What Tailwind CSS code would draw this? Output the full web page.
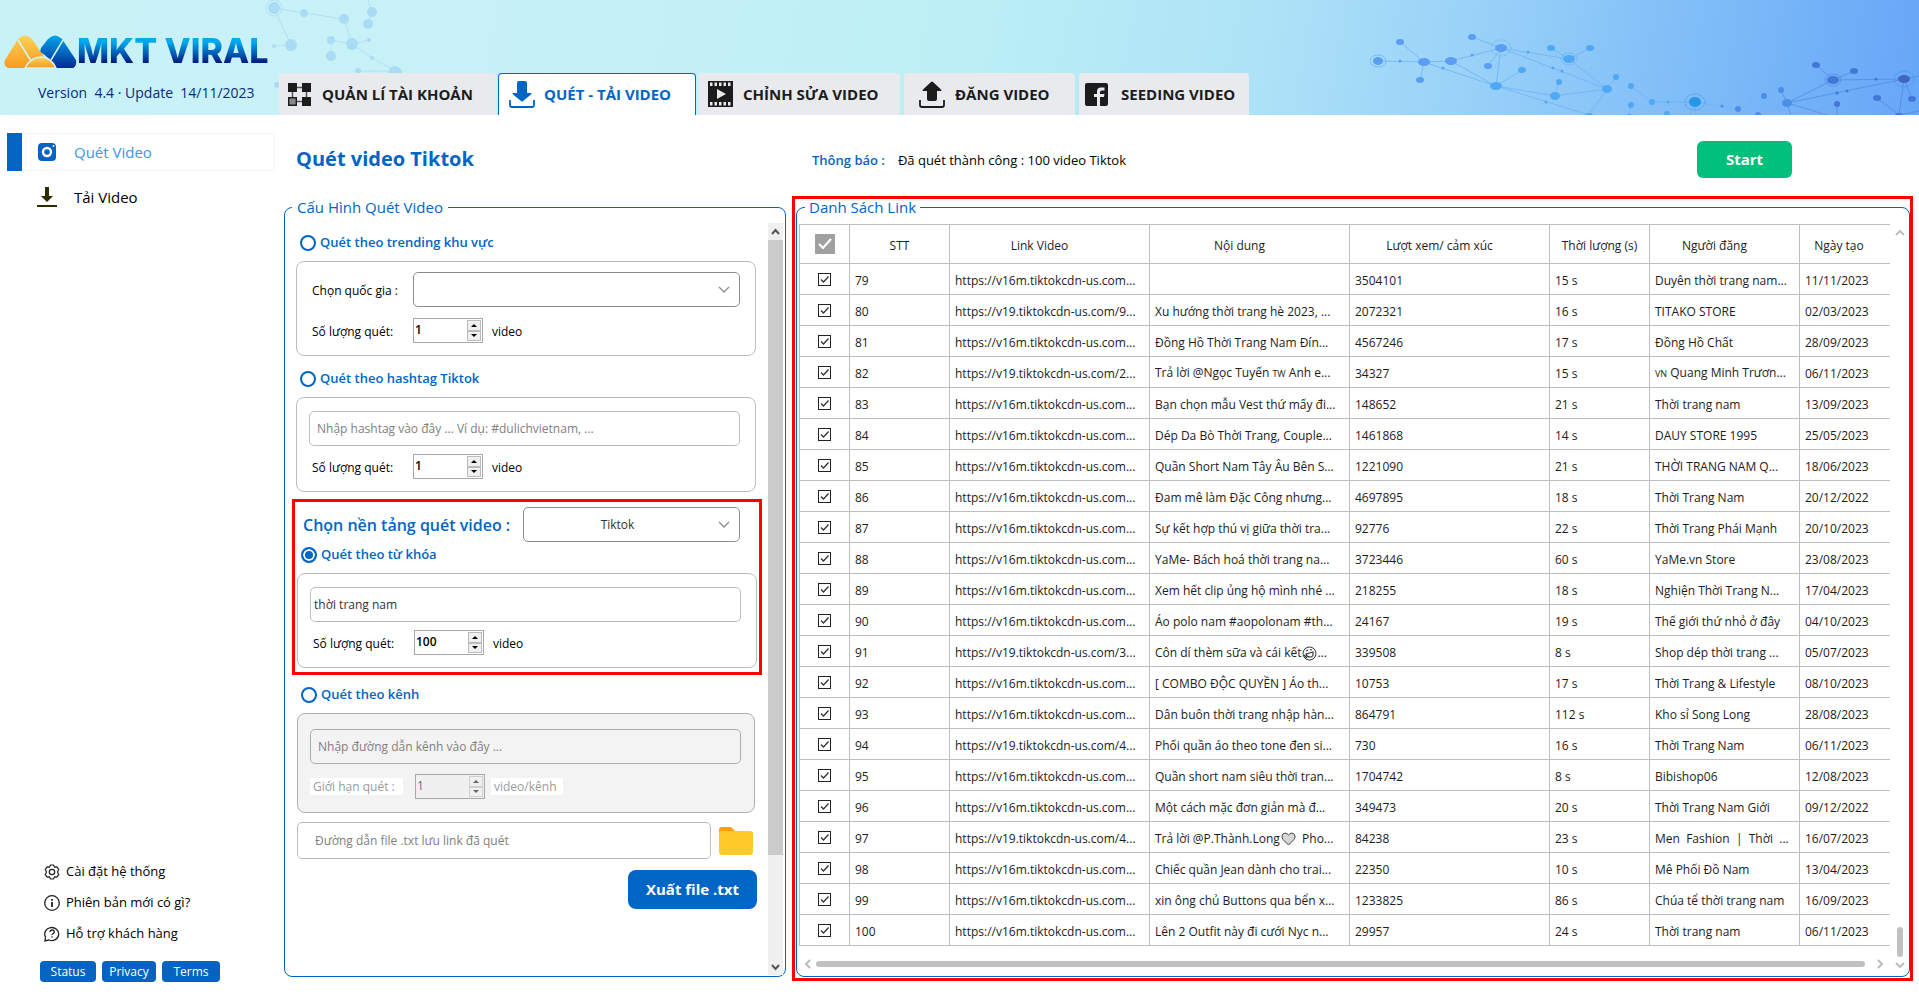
<!DOCTYPE html>
<html lang="vi">
<head>
<meta charset="utf-8">
<title>MKT Viral</title>
<script src="https://cdn.jsdelivr.net/npm/@tailwindcss/browser@4"></script>
</head>
<body class="flex min-h-screen flex-col bg-white font-['Open_Sans','Noto_Sans',sans-serif] text-[13px] text-black">

<header class="relative flex h-[115px] shrink-0 overflow-hidden bg-[linear-gradient(100deg,#c9f2f7_0%,#c6f1f7_30%,#bceff5_50%,#aee3f7_65%,#9ad2f8_76%,#83c0f8_86%,#66a6f7_100%)]">
  <!-- network pattern, left -->
  <svg class="absolute top-0 left-[260px]" width="150" height="115" fill="#a9dbf5" stroke="none" aria-hidden="true">
    <path d="M18 0 14 8 44 13 84 19 92 44 112 58 136 71M14 8 31 45 14 46M71 40l20 4 18-4M71 40v15M108 0l4 12-4 12M97 71h34" fill="none" stroke="#b3e0f4"/>
    <circle cx="14" cy="8" r="8" fill="none" stroke="#b3e0f4"/>
    <circle cx="14" cy="8" r="6"/><circle cx="44" cy="13" r="4"/><circle cx="84" cy="19" r="5"/><circle cx="112" cy="12" r="5"/><circle cx="108" cy="24" r="5"/><circle cx="31" cy="45" r="6"/><circle cx="14" cy="46" r="2"/><circle cx="71" cy="40" r="4"/><circle cx="71" cy="56" r="5"/><circle cx="92" cy="44" r="6"/><circle cx="109" cy="40" r="2"/><circle cx="112" cy="58" r="2"/><circle cx="98" cy="71" r="3"/><circle cx="135" cy="73" r="7"/><circle cx="17" cy="85" r="3"/>
  </svg>
  <!-- network pattern, right -->
  <svg class="absolute top-0 right-0" width="549" height="115" aria-hidden="true">
    <g fill="none" stroke="#6fb2f5" opacity=".8">
      <path d="M8 61 54 62 30 42M50 80l4-18 72 24L81 61M54 62l27-1 50-13-29-11M118 66l13-18-5 38 26-16M131 48l68 11-18-11M131 48l106 41-38-30 21-11M246 77l-9 12-52 7 4-14M185 96l-59-10 93 29 18-26M261 86l21 16h43l43 7 26-13M261 105l-2 10M325 102l-5 13M325 102l1 13"/>
      <ellipse cx="8" cy="61" rx="8" ry="6"/><ellipse cx="131" cy="48" rx="10" ry="8" stroke-dasharray="2 1"/><ellipse cx="199" cy="59" rx="8" ry="6"/><ellipse cx="325" cy="102" rx="10" ry="8" stroke="#3a97ea" stroke-dasharray="2 1"/>
    </g>
    <g fill="none" stroke="#4a80dd" opacity=".6">
      <path d="M446 65l17 15 21-9M463 80l71-1-117 24-6-13M463 80l-46 23 40 12M417 103l4 12M467 104v11M534 79l-5 36-22-17M534 79l8 20M534 79l15-3M529 115l20-4"/>
      <ellipse cx="463" cy="80" rx="8" ry="6"/><ellipse cx="534" cy="79" rx="10" ry="8" stroke-dasharray="2 1"/>
    </g>
    <g fill="#5a9df2"><ellipse cx="8" cy="61" rx="5" ry="4"/><ellipse cx="30" cy="42" rx="4" ry="3"/><ellipse cx="50" cy="80" rx="4" ry="3"/><circle cx="30" cy="61" r="1.500"/><ellipse cx="54" cy="62" rx="6" ry="4"/><ellipse cx="81" cy="61" rx="6" ry="4"/><circle cx="73" cy="68" r="1.500"/><circle cx="102" cy="55" r="1.500"/><ellipse cx="102" cy="37" rx="4" ry="3"/><ellipse cx="131" cy="48" rx="6" ry="4"/><ellipse cx="118" cy="66" rx="4" ry="3"/></g>
    <g fill="#4fa8f4"><ellipse cx="126" cy="86" rx="6" ry="4"/><ellipse cx="152" cy="70" rx="4" ry="3"/><circle cx="158" cy="52" r="1.500"/><circle cx="183" cy="68" r="1.500"/><circle cx="192" cy="71" r="1.500"/><circle cx="176" cy="102" r="1.500"/><ellipse cx="181" cy="48" rx="4" ry="3"/><ellipse cx="220" cy="48" rx="4" ry="3"/><ellipse cx="199" cy="59" rx="6" ry="4"/><circle cx="189" cy="82" r="3"/><ellipse cx="185" cy="96" rx="5" ry="4"/><circle cx="246" cy="77" r="3"/><ellipse cx="237" cy="89" rx="5" ry="4"/><circle cx="261" cy="86" r="3"/><circle cx="282" cy="102" r="3"/><circle cx="298" cy="102" r="1.500"/><circle cx="261" cy="105" r="3"/><circle cx="297" cy="114" r="3"/><ellipse cx="219" cy="115" rx="4" ry="2"/><ellipse cx="259" cy="115" rx="3" ry="1"/></g>
    <ellipse cx="325" cy="102" rx="6" ry="5" fill="#2896ea"/>
    <g fill="#4a8ee8"><circle cx="352" cy="106" r="1.500"/><circle cx="368" cy="109" r="3"/><circle cx="394" cy="96" r="3"/><circle cx="411" cy="90" r="3"/><ellipse cx="417" cy="103" rx="5" ry="4"/><circle cx="388" cy="115" r="3"/></g>
    <g fill="#4277d8"><ellipse cx="446" cy="65" rx="4" ry="3"/><ellipse cx="484" cy="71" rx="4" ry="3"/><ellipse cx="463" cy="80" rx="6" ry="4"/><circle cx="467" cy="93" r="1.500"/><circle cx="477" cy="91" r="1.500"/><circle cx="506" cy="79" r="1.500"/><circle cx="467" cy="104" r="3"/><ellipse cx="507" cy="98" rx="4" ry="3"/><ellipse cx="534" cy="79" rx="6" ry="4" fill="#3f66c6"/><ellipse cx="542" cy="99" rx="4" ry="3"/><ellipse cx="529" cy="115" rx="4" ry="2"/></g>
  </svg>

  <div class="z-10 flex w-[279px] shrink-0 flex-col pt-[35px] pl-1">
    <div class="flex h-[34px] items-end">
      <svg class="shrink-0" width="73" height="34" viewBox="0 0 73 34" aria-hidden="true">
        <defs>
          <linearGradient id="gold" x1="0" y1="0" x2="0" y2="1"><stop offset="0" stop-color="#fbd25a"/><stop offset="1" stop-color="#fa9a1c"/></linearGradient>
          <linearGradient id="sea" x1="0" y1="0" x2="0" y2="1"><stop offset="0" stop-color="#02a5ec"/><stop offset="1" stop-color="#022a94"/></linearGradient>
        </defs>
        <path d="M37 13 44 4q7-7 14 0L72 25q1 6-3 8H50Q46 22 36 17z" fill="url(#sea)"/>
        <path d="M1 25 14 4q7-7 14 0l13 19-5 10H4q-5-3-3-8z" fill="url(#gold)"/>
        <path d="M14 5 27 26M59 5 47 25" stroke="#d5f4f8" stroke-width="1.5" fill="none"/>
        <path d="M21 33Q27 22 37 22T52 33z" fill="url(#gold)" stroke="#d5f4f8" stroke-width="1.5"/>
        <path d="M18 33.500h36v.5H18z" fill="#d5f4f8"/>
      </svg>
      <span class="bg-linear-to-b from-[#02a9ee] from-25% to-[#021f88] to-80% bg-clip-text font-['Inter'] text-[34px] leading-[36px] font-extrabold whitespace-nowrap text-transparent">MKT VIRAL</span>
    </div>
    <p class="mt-3 pl-[34px] text-[14px] leading-6 font-medium whitespace-pre text-[#0b2a7a]">Version  4.4 · Update  14/11/2023</p>
  </div>

  <nav class="z-10 flex items-end text-[15px] font-bold text-[#1c1c1c]">
    <button class="flex h-[42px] w-[217px] items-center gap-[11px] rounded-t bg-[#e9eaee] pl-[9px] whitespace-nowrap">
      <svg width="23" height="23" viewBox="0 0 23 23" aria-hidden="true"><path d="M9 4.500h5M4.500 9v5M18.500 9v5M9 18.500h5" stroke="#555" stroke-width="1.500"/><path d="M0 0h9v9H0zM14 0h9v9h-9zM14 14h9v9h-9z" fill="#1c1c1c"/><path d="M.7.7h7.600v7.600H.7z" transform="translate(0 14)" fill="#888" stroke="#1c1c1c" stroke-width="1.400"/></svg>
      QUẢN LÍ TÀI KHOẢN</button>
    <button class="ml-[2px] flex h-[42px] w-[198px] items-center gap-[9px] rounded-t border border-b-0 border-[#0066c5] bg-white pl-[10px] whitespace-nowrap text-[#0066c5]">
      <svg width="26" height="27" viewBox="0 0 26 27" fill="#0066c5" aria-hidden="true"><path d="M8 2q0-2 2-2h6q2 0 2 2v10h4q1 0 0 1.500L14 20q-1 1-2 0L4 13.500Q3 12 4 12h4z"/><path d="M1 19v5q0 2 2 2h20q2 0 2-2v-5" fill="none" stroke="#0066c5" stroke-width="1.800"/></svg>
      QUÉT - TẢI VIDEO</button>
    <button class="ml-[3px] flex h-[42px] w-[201px] items-center gap-[10px] rounded-t bg-[#e9eaee] pl-[9px] whitespace-nowrap">
      <svg width="25" height="26" viewBox="0 0 25 26" aria-hidden="true"><path d="M0 0h25v26H0z" fill="#1c1c1c"/><path d="M2 1.500h2.500V5H2zM6.500 1.500H9V5H6.500zM11 1.500h2.500V5H11zM15.500 1.500H18V5h-2.500zM20 1.500h2.500V5H20zM2 21h2.500v3.500H2zM6.500 21H9v3.500H6.500zM11 21h2.500v3.500H11zM15.500 21H18v3.500h-2.500zM20 21h2.500v3.500H20zM9 8l9 5-9 5z" fill="#e9eaee"/></svg>
      CHỈNH SỬA VIDEO</button>
    <button class="ml-[4px] flex h-[42px] w-[171px] items-center gap-[10px] rounded-t bg-[#e9eaee] pl-[15px] whitespace-nowrap">
      <svg width="26" height="27" viewBox="0 0 26 27" fill="#1c1c1c" aria-hidden="true"><path d="M8 18q0 2 2 2h6q2 0 2-2v-8h4q1 0 0-1.500L14 1q-1-1-2 0L4 8.500Q3 10 4 10h4z"/><path d="M1 19v5q0 2 2 2h20q2 0 2-2v-5" fill="none" stroke="#1c1c1c" stroke-width="1.800"/></svg>
      ĐĂNG VIDEO</button>
    <button class="ml-[4px] flex h-[42px] w-[170px] items-center gap-[13px] rounded-t bg-[#e9eaee] pl-[6px] whitespace-nowrap">
      <svg width="23" height="23" viewBox="0 0 23 23" aria-hidden="true"><rect width="23" height="23" rx="2" fill="#1c1c1c"/><path d="M12 23v-9H9v-3h3V8.500Q12 4.500 16 4.500h3.500v3H17q-2 0-2 1.500v2h4.500l-.5 3h-4v9z" fill="#e9eaee"/></svg>
      SEEDING VIDEO</button>
  </nav>
</header>

<div class="flex flex-1">
  <aside class="flex w-[284px] shrink-0 flex-col pt-[18px] pb-[12px] pl-[7px]">
    <a href="#" class="flex h-[38px] items-stretch gap-[3px] text-[#4095e5]">
      <span class="w-[15px] bg-[#0563c1]"></span>
      <span class="flex w-[250px] items-center gap-[18px] border border-[#eef8fd] pl-3 text-[15px]">
        <svg width="18" height="18" viewBox="0 0 18 18" aria-hidden="true"><rect width="18" height="18" rx="4" fill="#0563c1"/><circle cx="9" cy="9" r="4" fill="none" stroke="#fff" stroke-width="2.400"/><circle cx="15.500" cy="3" r="1" fill="#fff"/></svg>
        Quét Video</span>
    </a>
    <a href="#" class="mt-2 flex h-[36px] items-center gap-[17px] pl-[30px] text-[15px]">
      <svg width="20" height="20" viewBox="0 0 20 20" fill="#2c2c00" aria-hidden="true"><path d="M8 0h4v9h4l-6 6-6-6h4zM0 18h20v2H0z"/></svg>
      Tải Video</a>
    <div class="mt-auto flex flex-col text-[13px]">
      <a href="#" class="flex h-[31px] items-center gap-[6px] pl-[37px]">
        <svg width="16" height="16" viewBox="0 0 16 16" fill="none" stroke="#222" stroke-width="1.200" aria-hidden="true"><path d="M6.500 1h3l1 2 2.300-.2L14.700 5.400 13.500 8l1.200 2.600-1.900 2.600-2.300-.2-1 2h-3l-1-2-2.300.2-1.900-2.600L2.500 8 1.300 5.400l1.900-2.600 2.300.2z"/><circle cx="8" cy="8" r="2.700"/></svg>
        Cài đặt hệ thống</a>
      <a href="#" class="flex h-[31px] items-center gap-[6px] pl-[37px]">
        <svg width="16" height="16" viewBox="0 0 16 16" fill="none" stroke="#222" stroke-width="1.300" aria-hidden="true"><circle cx="8" cy="8" r="7.300"/><path d="M8 7v5M8 4v1.800" stroke-width="1.800"/></svg>
        Phiên bản mới có gì?</a>
      <a href="#" class="flex h-[31px] items-center gap-[6px] pl-[37px]">
        <svg width="16" height="16" viewBox="0 0 16 16" fill="none" stroke="#222" stroke-width="1.300" aria-hidden="true"><path d="M1.500 11A7 6.500 0 1 1 5 14L1 15z"/><path d="M6 6q.2-2 2.200-2T10.300 6q0 1-1.200 1.600T8.100 9M8.100 10.200v1.300"/></svg>
        Hỗ trợ khách hàng</a>
    </div>
    <div class="mt-3 flex gap-[6px] pl-[33px] text-[12px] leading-[21px] text-white">
      <button class="w-[56px] rounded bg-[#0563c1]">Status</button>
      <button class="w-[54px] rounded bg-[#0563c1]">Privacy</button>
      <button class="w-[58px] rounded bg-[#0563c1]">Terms</button>
    </div>
  </aside>

  <main class="flex min-w-0 flex-1 flex-col">
    <div class="flex h-[81px] items-center pt-[7px] pr-[127px]">
      <h1 class="w-[528px] pl-3 text-[20px] leading-7 font-bold text-[#0066c5]">Quét video Tiktok</h1>
      <p class="flex gap-[13px] pt-1 text-[13px]"><span class="font-semibold text-[#0066c5]">Thông báo :</span><span>Đã quét thành công : 100 video Tiktok</span></p>
      <button class="ml-auto h-[37px] w-[95px] rounded-md bg-[#00c07c] text-[15px] font-bold text-white">Start</button>
    </div>

    <div class="flex flex-1 gap-[6px] pr-[6px] pb-[13px]">
      <fieldset class="mt-px mb-1 flex w-[502px] shrink-0 rounded-lg border border-[#0066c5]">
        <legend class="ml-[7px] px-[5px] text-[15px] leading-5 text-[#0066c5]">Cấu Hình Quét Video</legend>
        <form class="flex flex-1 flex-col pt-[15px] pl-[11px]" onsubmit="return false">
          <label class="flex h-[21px] items-center gap-1 pl-1 text-[13px] font-semibold text-[#0066c5]"><input type="radio" name="mode" class="size-4 appearance-none rounded-full border-2 border-[#0066c5] bg-white checked:bg-[#0066c5] checked:shadow-[inset_0_0_0_2px_white]">Quét theo trending khu vực</label>
          <section class="mt-2 w-[460px] rounded-lg border border-[#bdbdbd] px-[15px] pt-[10px] pb-3 text-[12px]">
            <div class="flex items-center"><label for="country" class="w-[101px] pt-[3px]">Chọn quốc gia :</label>
              <span class="grid h-[35px] w-[327px]"><select id="country" class="[grid-area:1/1] appearance-none rounded-[5px] border border-[#8c8c8c] bg-white"><option></option></select><svg class="pointer-events-none mr-[10px] self-center justify-self-end [grid-area:1/1]" width="12" height="8" fill="none" stroke="#8c8c8c" stroke-width="1.300" aria-hidden="true"><path d="M1 1l5 5 5-5"/></svg></span></div>
            <div class="mt-[11px] flex items-center"><label for="n1" class="w-[101px] pt-[3px]">Số lượng quét:</label>
              <span class="flex h-[25px] w-[70px] border border-[#a7a7ad] bg-white p-px"><input id="n1" type="text" inputmode="numeric" value="1" class="h-[19px] w-0 flex-1 font-semibold outline-none"><span class="flex w-[14px] flex-col"><button aria-label="Tăng" class="flex flex-1 items-center justify-center border border-[#bbb] bg-[#f0f0f0]"><svg width="6" height="3"><path d="M0 3h6L3 0z"/></svg></button><button aria-label="Giảm" class="flex flex-1 items-center justify-center border border-[#bbb] bg-[#f0f0f0]"><svg width="6" height="3"><path d="M0 0h6L3 3z"/></svg></button></span></span>
              <span class="ml-[9px] pt-[3px]">video</span></div>
          </section>

          <label class="mt-3 flex h-[21px] items-center gap-1 pl-1 text-[13px] font-semibold text-[#0066c5]"><input type="radio" name="mode" class="size-4 appearance-none rounded-full border-2 border-[#0066c5] bg-white checked:bg-[#0066c5] checked:shadow-[inset_0_0_0_2px_white]">Quét theo hashtag Tiktok</label>
          <section class="mt-2 w-[460px] rounded-lg border border-[#bdbdbd] px-[15px] pt-[13px] pb-3 text-[12px]">
            <input type="text" aria-label="Hashtag" placeholder="Nhập hashtag vào đây ... Ví dụ: #dulichvietnam, ..." class="-ml-[3px] block h-[35px] w-[431px] rounded-[5px] border border-[#bdbdbd] px-[7px] placeholder:text-[#808080]">
            <div class="mt-2 flex items-center"><label for="n2" class="w-[101px] pt-[3px]">Số lượng quét:</label>
              <span class="flex h-[25px] w-[70px] border border-[#a7a7ad] bg-white p-px"><input id="n2" type="text" inputmode="numeric" value="1" class="h-[19px] w-0 flex-1 font-semibold outline-none"><span class="flex w-[14px] flex-col"><button aria-label="Tăng" class="flex flex-1 items-center justify-center border border-[#bbb] bg-[#f0f0f0]"><svg width="6" height="3"><path d="M0 3h6L3 0z"/></svg></button><button aria-label="Giảm" class="flex flex-1 items-center justify-center border border-[#bbb] bg-[#f0f0f0]"><svg width="6" height="3"><path d="M0 0h6L3 3z"/></svg></button></span></span>
              <span class="ml-[9px] pt-[3px]">video</span></div>
          </section>

          <div class="mt-[7px] -ml-1 w-[470px] border-3 border-[#ff0000] pt-[5px] pb-1 pl-[2px]">
            <div class="flex items-center pl-[6px]"><label for="platform" class="w-[220px] text-[16px] leading-5 font-semibold whitespace-nowrap text-[#0066c5]">Chọn nền tảng quét video :</label>
              <span class="grid h-[35px] w-[217px]"><select id="platform" class="appearance-none rounded-[5px] border border-[#8c8c8c] bg-white pr-[28px] text-center text-[12px] text-[#333] [grid-area:1/1]"><option>Tiktok</option></select><svg class="pointer-events-none mr-[10px] self-center justify-self-end [grid-area:1/1]" width="12" height="8" fill="none" stroke="#8c8c8c" stroke-width="1.300" aria-hidden="true"><path d="M1 1l5 5 5-5"/></svg></span></div>
            <label class="mt-[2px] flex h-[21px] items-center gap-1 pl-1 text-[13px] font-semibold text-[#0066c5]"><input type="radio" name="mode" checked class="size-4 appearance-none rounded-full border-2 border-[#0066c5] bg-white checked:bg-[#0066c5] checked:shadow-[inset_0_0_0_2px_white]">Quét theo từ khóa</label>
            <section class="mt-2 w-[460px] rounded-lg border border-[#bdbdbd] px-[15px] pt-[13px] pb-3 text-[12px]">
              <input type="text" aria-label="Từ khóa" value="thời trang nam" class="-ml-[3px] block h-[35px] w-[431px] rounded-[5px] border border-[#bdbdbd] px-[3px] text-[#333]">
              <div class="mt-2 flex items-center"><label for="n3" class="w-[101px] pt-[3px]">Số lượng quét:</label>
                <span class="flex h-[25px] w-[70px] border border-[#a7a7ad] bg-white p-px"><input id="n3" type="text" inputmode="numeric" value="100" class="h-[19px] w-0 flex-1 font-semibold outline-none"><span class="flex w-[14px] flex-col"><button aria-label="Tăng" class="flex flex-1 items-center justify-center border border-[#bbb] bg-[#f0f0f0]"><svg width="6" height="3"><path d="M0 3h6L3 0z"/></svg></button><button aria-label="Giảm" class="flex flex-1 items-center justify-center border border-[#bbb] bg-[#f0f0f0]"><svg width="6" height="3"><path d="M0 0h6L3 3z"/></svg></button></span></span>
                <span class="ml-[9px] pt-[3px]">video</span></div>
            </section>
          </div>

          <div class="pl-px">
            <label class="mt-[9px] flex h-[21px] items-center gap-1 pl-1 text-[13px] font-semibold text-[#0066c5]"><input type="radio" name="mode" class="size-4 appearance-none rounded-full border-2 border-[#0066c5] bg-white checked:bg-[#0066c5] checked:shadow-[inset_0_0_0_2px_white]">Quét theo kênh</label>
            <section class="mt-2 w-[458px] rounded-lg border border-[#aab0ae] bg-[#f3f3f3] px-3 pt-[15px] pb-[13px] text-[12px] text-[#9a9a9a]">
              <input type="text" disabled aria-label="Kênh" placeholder="Nhập đường dẫn kênh vào đây ..." class="block h-[35px] w-[431px] rounded-[5px] border border-[#aab0ae] px-[7px] placeholder:text-[#808080]">
              <div class="mt-[10px] flex items-center"><label for="n4" class="mr-3 w-[93px] bg-white pl-[3px] leading-[17px]">Giới hạn quét :</label>
                <span class="flex h-[25px] w-[70px] border border-[#a7a7ad] bg-[#f0f0f0] p-px"><input id="n4" disabled type="text" value="1" class="h-[19px] w-0 flex-1 text-[#6d6d7d] outline-none"><span class="flex w-[14px] flex-col"><button disabled aria-label="Tăng" class="flex flex-1 items-center justify-center border border-[#d0d0d0] bg-[#f0f0f0]"><svg width="6" height="3" fill="#666"><path d="M0 3h6L3 0z"/></svg></button><button disabled aria-label="Giảm" class="flex flex-1 items-center justify-center border border-[#d0d0d0] bg-[#f0f0f0]"><svg width="6" height="3" fill="#666"><path d="M0 0h6L3 3z"/></svg></button></span></span>
                <span class="ml-[6px] w-[72px] bg-white pl-[3px] leading-[17px]">video/kênh</span></div>
            </section>
            <div class="mt-[9px] flex items-center gap-2">
              <input type="text" aria-label="Đường dẫn file" placeholder="Đường dẫn file .txt lưu link đã quét" class="h-[37px] w-[414px] rounded-[5px] border border-[#bdbdbd] px-[17px] text-[12px] placeholder:text-[#808080]">
              <button aria-label="Chọn thư mục"><svg width="34" height="28" viewBox="0 0 34 28" aria-hidden="true"><path d="M0 3q0-3 3-3h8q1 0 2 1l3 3v6H0z" fill="#ffa000"/><rect y="4" width="34" height="24" rx="3" fill="#ffca28"/></svg></button>
            </div>
            <button class="mt-[11px] ml-[331px] h-[39px] w-[129px] rounded-lg bg-[#0066c5] text-[15px] font-bold whitespace-nowrap text-white">Xuất file .txt</button>
          </div>
        </form>
        <div class="mt-[6px] mr-[2px] mb-px flex w-[15px] flex-col bg-[#f0f0f0]" aria-hidden="true">
          <svg width="15" height="17" fill="none" stroke="#555" stroke-width="2"><path d="M4 11l3.500-4 3.500 4"/></svg>
          <div class="h-[615px] bg-[#cbcbcb]"></div>
          <svg class="mt-auto" width="15" height="17" fill="none" stroke="#555" stroke-width="2"><path d="M4 7l3.500 4L11 7"/></svg>
        </div>
      </fieldset>

      <div class="flex min-w-0 flex-1 border-3 border-[#ff0000] pb-px pl-px">
        <fieldset class="flex min-w-0 flex-1 rounded-lg border border-[#0066c5]">
          <legend class="ml-[8px] px-1 text-[15px] leading-4 text-[#0066c5]">Danh Sách Link</legend>
          <div class="flex min-w-0 flex-1 flex-col pt-[9px] pl-[2px]">
            <table class="w-full table-fixed border-collapse border-y border-l border-[#bfbfbf] text-[12px] text-[#1c1c1c]">
              <colgroup><col class="w-[50px]"><col class="w-[100px]"><col class="w-[200px]"><col class="w-[200px]"><col class="w-[200px]"><col class="w-[100px]"><col class="w-[150px]"><col></colgroup>
              <thead>
                <tr class="h-[39px] text-center">
                  <th class="border-r border-[#bfbfbf] p-0"><label class="inline-grid align-middle"><input type="checkbox" checked aria-label="Chọn tất cả" class="size-5 appearance-none bg-[#a0a0a0] [grid-area:1/1]"><svg class="pointer-events-none [grid-area:1/1]" width="20" height="20" fill="none" stroke="#fff" stroke-width="2.200"><path d="M4 10l4 4 8-9"/></svg></label></th>
                  <th class="border-r border-[#bfbfbf] p-0 pt-1 font-normal">STT</th>
                  <th class="border-r border-[#bfbfbf] p-0 pt-1 pr-5 font-normal">Link Video</th>
                  <th class="border-r border-[#bfbfbf] p-0 pt-1 pr-5 font-normal">Nội dung</th>
                  <th class="border-r border-[#bfbfbf] p-0 pt-1 pr-5 font-normal">Lượt xem/ cảm xúc</th>
                  <th class="border-r border-[#bfbfbf] p-0 pt-1 font-normal whitespace-nowrap">Thời lượng (s)</th>
                  <th class="border-r border-[#bfbfbf] p-0 pt-1 pr-5 font-normal">Người đăng</th>
                  <th class="p-0 pt-1 pr-3 font-normal">Ngày tạo</th>
                </tr>
              </thead>
              <tbody id="rows"></tbody>
            </table>
            <div class="mt-auto mb-[7px] flex items-center gap-[5px] pl-[6px]" aria-hidden="true">
              <svg width="6" height="10" fill="none" stroke="#bdbdbd" stroke-width="2"><path d="M5 1L1 5l4 4"/></svg>
              <div class="h-[6px] flex-1 rounded-full bg-[#c1c1c1]"></div>
              <svg class="mx-[7px]" width="6" height="10" fill="none" stroke="#bdbdbd" stroke-width="2"><path d="M1 1l4 4-4 4"/></svg>
            </div>
          </div>
          <div class="flex w-[19px] flex-col items-center pt-[15px] pb-[8px]" aria-hidden="true">
            <svg width="10" height="6" fill="none" stroke="#bdbdbd" stroke-width="2"><path d="M1 5l4-4 4 4"/></svg>
            <div class="mt-auto mb-[5px] h-[30px] w-[6px] rounded-full bg-[#c1c1c1]"></div>
            <svg width="10" height="6" fill="none" stroke="#bdbdbd" stroke-width="2"><path d="M1 1l4 4 4-4"/></svg>
          </div>
        </fieldset>
      </div>
    </div>
  </main>
</div>

<script>
const laugh = '<svg class="ml-px inline" width="15" height="15" viewBox="0 0 15 15" fill="none" stroke="#333" aria-hidden="true"><circle cx="7.500" cy="7.500" r="6.500"/><path d="M4 8l7-2q1 5-3 5-3 0-4-3zM4 5l2-1M8 3.500l2 .5M2 9l3 3" stroke-width="1.200"/></svg>';
const heart = '<svg class="ml-px inline" width="15" height="14" viewBox="0 0 15 14" fill="#d6d6d6" stroke="#444" aria-hidden="true"><path d="M7.500 13 2 7.500Q0 5 1.500 2.500 4.500-.5 7.500 3q3-3.500 6-.5Q15 5 13 7.500z"/></svg>';
const m = "https://v16m.tiktokcdn-us.com...", n = "https://v19.tiktokcdn-us.com/";
const data = [
 [79,m,"","3504101","15 s","Duyên thời trang nam...","11/11/2023"],
 [80,n+"9...","Xu hướng thời trang hè 2023, ...","2072321","16 s","TITAKO STORE","02/03/2023"],
 [81,m,"Đồng Hồ Thời Trang Nam Đín...","4567246","17 s","Đồng Hồ Chất","28/09/2023"],
 [82,n+"2...",'Trả lời @Ngọc Tuyến <span class="text-[9px]">TW</span> Anh e...',"34327","15 s",'<span class="text-[9px]">VN</span> Quang Minh Trươn...',"06/11/2023"],
 [83,m,"Bạn chọn mẫu Vest thứ mấy đi...","148652","21 s","Thời trang nam","13/09/2023"],
 [84,m,"Dép Da Bò Thời Trang, Couple...","1461868","14 s","DAUY STORE 1995","25/05/2023"],
 [85,m,"Quần Short Nam Tây Âu Bên S...","1221090","21 s","THỜI TRANG NAM Q...","18/06/2023"],
 [86,m,"Đam mê làm Đặc Công nhưng...","4697895","18 s","Thời Trang Nam","20/12/2022"],
 [87,m,"Sự kết hợp thú vị giữa thời tra...","92776","22 s","Thời Trang Phái Mạnh","20/10/2023"],
 [88,m,"YaMe- Bách hoá thời trang na...","3723446","60 s","YaMe.vn Store","23/08/2023"],
 [89,m,"Xem hết clip ủng hộ mình nhé ...","218255","18 s","Nghiện Thời Trang N...","17/04/2023"],
 [90,m,"Áo polo nam #aopolonam #th...","24167","19 s","Thế giới thứ nhỏ ở đây","04/10/2023"],
 [91,n+"3...","Côn dí thèm sữa và cái kết"+laugh+"...","339508","8 s","Shop dép thời trang ...","05/07/2023"],
 [92,m,"[ COMBO ĐỘC QUYỀN ] Áo th...","10753","17 s","Thời Trang &amp; Lifestyle","08/10/2023"],
 [93,m,"Dân buôn thời trang nhập hàn...","864791","112 s","Kho sỉ Song Long","28/08/2023"],
 [94,n+"4...","Phối quần áo theo tone đen si...","730","16 s","Thời Trang Nam","06/11/2023"],
 [95,m,"Quần short nam siêu thời tran...","1704742","8 s","Bibishop06","12/08/2023"],
 [96,m,"Một cách mặc đơn giản mà đ...","349473","20 s","Thời Trang Nam Giới","09/12/2022"],
 [97,n+"4...","Trả lời @P.Thành.Long"+heart+"  Pho...","84238","23 s","Men  Fashion  |  Thời  ...","16/07/2023"],
 [98,m,"Chiếc quần Jean dành cho trai...","22350","10 s","Mê Phối Đồ Nam","13/04/2023"],
 [99,m,"xin ông chủ Buttons qua bển x...","1233825","86 s","Chúa tể thời trang nam","16/09/2023"],
 [100,m,"Lên 2 Outfit này đi cưới Nyc n...","29957","24 s","Thời trang nam","06/11/2023"],
];
document.getElementById("rows").innerHTML = data.map(r =>
 `<tr class="h-[31px] border-t border-[#bfbfbf]"><td class="border-r border-[#bfbfbf] p-0 text-center"><label class="inline-grid align-middle"><input type="checkbox" checked aria-label="Chọn ${r[0]}" class="size-[13px] appearance-none border border-[#222] bg-white [grid-area:1/1]"><svg class="pointer-events-none [grid-area:1/1]" width="13" height="13" fill="none" stroke="#333" stroke-width="1.300"><path d="M3 6.500l2.500 2.500L10.500 3.500"/></svg></label></td>` +
 r.slice(0,6).map(c => `<td class="overflow-hidden border-r border-[#bfbfbf] pt-[3px] pr-0 pb-0 pl-[5px] leading-5 whitespace-pre">${c}</td>`).join("") +
 `<td class="overflow-hidden pt-[3px] pr-0 pb-0 pl-[5px] leading-5 whitespace-pre">${r[6]}</td></tr>`).join("");
</script>
</body>
</html>
